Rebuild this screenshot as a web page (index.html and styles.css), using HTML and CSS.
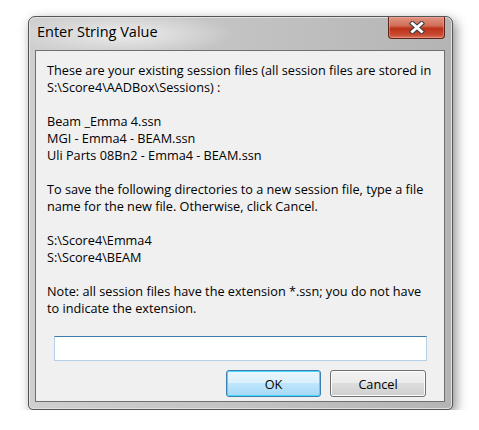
FILE: index.html
```html
<!DOCTYPE html>
<html lang="en">
    <head>
        <meta charset="utf-8">
        <title>Enter String Value</title>
        <link rel="stylesheet" href="styles.css">
    </head>
    <body>
        <div class="window">
            <div class="titlebar">
                <span class="title">Enter String Value</span>
                <button type="button" class="close" aria-label="Close">
                    <svg width="16" height="13" viewBox="0 0 16 13">
                        <path d="M3.5 2.5 L12.5 10.5 M12.5 2.5 L3.5 10.5" stroke="#3a3a3a" stroke-width="5" stroke-linecap="square"/>
                        <path d="M3.5 2.5 L12.5 10.5 M12.5 2.5 L3.5 10.5" stroke="#fff" stroke-width="3" stroke-linecap="square"/>
                    </svg>
                </button>
            </div>
            <div class="client">
                <div class="message">
                    <p>These are your existing session files (all session files are stored in<br>S:\Score4\AADBox\Sessions) :</p>
                    <p>Beam _Emma 4.ssn<br>MGI - Emma4 - BEAM.ssn<br>Uli Parts 08Bn2 - Emma4 - BEAM.ssn</p>
                    <p>To save the following directories to a new session file, type a file<br>name for the new file. Otherwise, click Cancel.</p>
                    <p>S:\Score4\Emma4<br>S:\Score4\BEAM</p>
                    <p>Note: all session files have the extension *.ssn; you do not have<br>to indicate the extension.</p>
                </div>
                <input type="text" class="answer">
                <div class="buttons">
                    <button type="button" class="btn default">OK</button>
                    <button type="button" class="btn">Cancel</button>
                </div>
            </div>
        </div>
    </body>
</html>
```

FILE: styles.css
```css
body {
    margin: 0;
    background: #fff;
    font-family: "Open Sans", "Noto Sans", sans-serif;
}
.window {
    width: 425px;
    height: 394px;
    margin: 16px 0 0 28px;
    box-sizing: border-box;
    display: flex;
    flex-direction: column;
    padding: 0 7px 7px 6px;
    border: 1px solid #555;
    border-radius: 7px 7px 5px 5px;
    background:
        radial-gradient(ellipse 110px 22px at 95px 17px, rgba(238, 238, 238, 0.95), rgba(238, 238, 238, 0)),
        linear-gradient(to right, #cfcfcf, #c0c0c0 60%, #b4b4b4),
        #bbb;
    box-shadow: 3px 4px 12px rgba(0, 0, 0, 0.45), inset 0 0 0 1px #e2e2e2;
}
.titlebar {
    height: 33px;
    display: flex;
    justify-content: space-between;
    align-items: flex-start;
}
.title {
    margin: 5px 0 0 2px;
    font-size: 14.5px;
    line-height: 20px;
    color: #000;
}
.close {
    width: 57px;
    height: 22px;
    padding: 0;
    display: flex;
    align-items: center;
    justify-content: center;
    border: 1px solid #5e2216;
    border-top: none;
    border-radius: 0 0 4px 4px;
    background: linear-gradient(to bottom, #e29483, #d0705a 40%, #bd3119 55%, #c84a30 85%, #d8765c);
    box-shadow: inset 0 0 0 1px rgba(255, 190, 175, 0.4);
}
.client {
    flex: 1;
    display: flex;
    flex-direction: column;
    border: 1px solid #6f6f6f;
    background: #f0f0f0;
}
.message {
    padding: 11px 10px 0 11px;
    font-size: 12.7px;
    line-height: 17px;
    color: #000;
    white-space: nowrap;
}
.message p {
    margin: 0 0 17px 0;
}
.answer {
    height: 25px;
    box-sizing: border-box;
    margin: 2px 17px 0 18px;
    border: 1px solid #b5cfe7;
    border-top-color: #3d7bad;
    background: #fff;
    outline: none;
}
.buttons {
    display: flex;
    justify-content: flex-end;
    gap: 9px;
    margin: 9px 18px 0 0;
}
.btn {
    width: 96px;
    height: 27px;
    padding: 0;
    font-family: inherit;
    font-size: 12.7px;
    color: #000;
    border: 1px solid #707070;
    border-radius: 3px;
    background: linear-gradient(to bottom, #f2f2f2, #ebebeb 50%, #dddddd 50%, #cfcfcf);
    box-shadow: inset 0 0 0 1px #fcfcfc;
}
.btn.default {
    width: 95px;
    border-color: #3c7fb1;
    background: linear-gradient(to bottom, #eaf6fd, #d9f0fc 50%, #bee6fd 50%, #a7d9f5);
    box-shadow: inset 0 0 0 1px #48d8fb;
}
```
